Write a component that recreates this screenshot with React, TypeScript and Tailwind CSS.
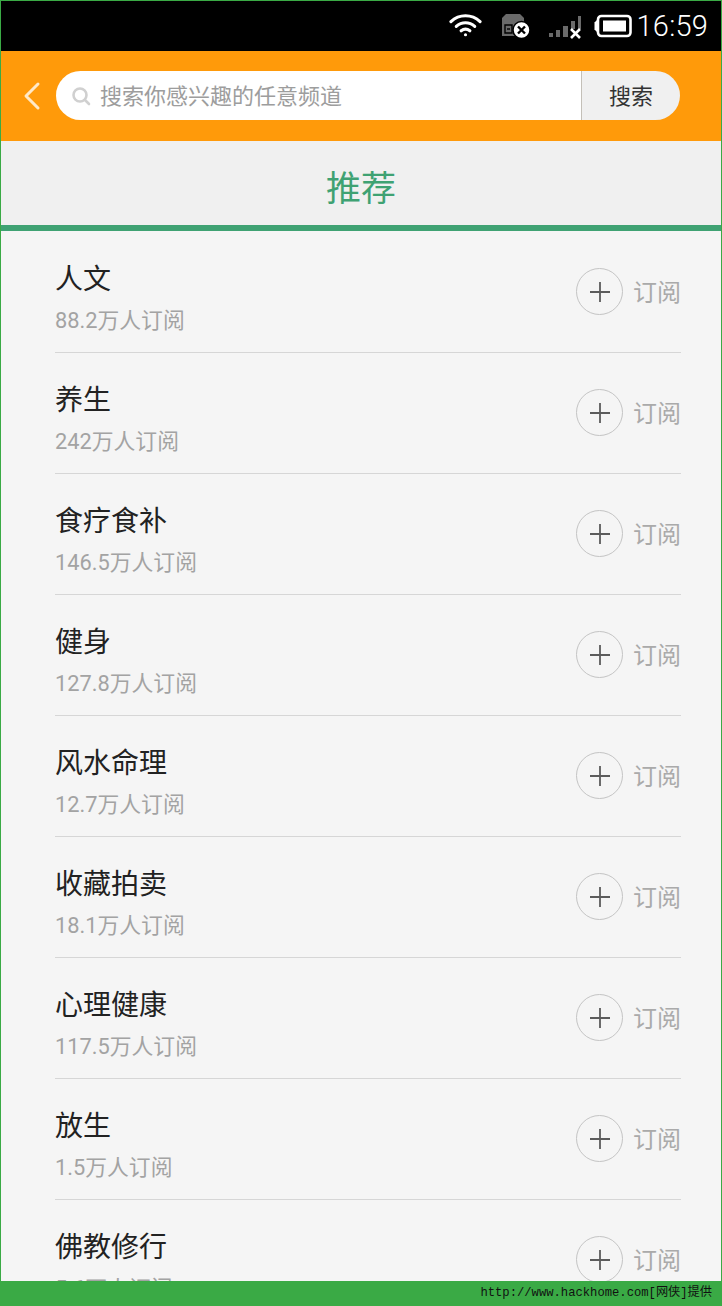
const font = { fontFamily: '"Roboto", "Noto Sans CJK SC", sans-serif' };

const channels = [
  { name: "人文", count: "88.2万人订阅" },
  { name: "养生", count: "242万人订阅" },
  { name: "食疗食补", count: "146.5万人订阅" },
  { name: "健身", count: "127.8万人订阅" },
  { name: "风水命理", count: "12.7万人订阅" },
  { name: "收藏拍卖", count: "18.1万人订阅" },
  { name: "心理健康", count: "117.5万人订阅" },
  { name: "放生", count: "1.5万人订阅" },
  { name: "佛教修行", count: "5.6万人订阅" },
];

function StatusBar() {
  return (
    <div className="h-[50px] shrink-0 bg-black flex items-center justify-end pr-[13px] text-white">
      {/* wifi */}
      <svg width="33" height="26" viewBox="0 0 34 26" className="mr-[19px] mb-[2px]" fill="none" stroke="#fff" strokeWidth="3.2" strokeLinecap="round">
        <path d="M2 9.5C10.5 1.5 23.5 1.5 32 9.5" />
        <path d="M7.5 14.5C13 9.5 21 9.5 26.5 14.5" />
        <path d="M12.5 19C15.2 16.8 18.8 16.8 21.5 19" />
        <circle cx="17" cy="23" r="1.6" fill="#fff" stroke="none" />
      </svg>
      {/* sim card missing */}
      <svg width="30" height="26" viewBox="0 0 30 26" className="mr-[17px] mb-[1px]">
        <path d="M5 1H19L23 5V23H1V5Z" fill="#6a6a6a" />
        <path d="M4 12H11V20H4Z" fill="none" stroke="#000" strokeWidth="1.4" />
        <path d="M6 16H9" stroke="#000" strokeWidth="1.4" />
        <circle cx="20.5" cy="17" r="8.5" fill="#fff" stroke="#000" strokeWidth="1.5" />
        <path d="M17 13.5L24 20.5M24 13.5L17 20.5" stroke="#000" strokeWidth="2.4" />
      </svg>
      {/* signal */}
      <svg width="34" height="26" viewBox="0 0 34 26" className="mr-[12px] mb-[1px]">
        <rect x="1" y="20" width="4" height="4" fill="#6a6a6a" />
        <rect x="8" y="17" width="4" height="7" fill="#6a6a6a" />
        <rect x="15" y="13" width="5" height="11" fill="#6a6a6a" />
        <rect x="23" y="8" width="4" height="8" fill="#6a6a6a" />
        <rect x="30" y="3" width="3" height="13" fill="#6a6a6a" />
        <path d="M23 16L32 25M32 16L23 25" stroke="#fff" strokeWidth="2.6" />
      </svg>
      {/* battery */}
      <svg width="38" height="24" viewBox="0 0 38 24" className="mr-[5px] mb-[1px]">
        <path d="M0.5 8.5L3 6V18L0.5 15.5Z" fill="#fff" />
        <rect x="4" y="2" width="32.5" height="20" rx="3.5" fill="none" stroke="#fff" strokeWidth="2.6" />
        <rect x="9" y="6.5" width="23" height="11" fill="#fff" />
      </svg>
      <span className="text-[29px] leading-none font-light tracking-[0.2px]" style={font}>16:59</span>
    </div>
  );
}

function SearchBar() {
  return (
    <div className="h-[90px] shrink-0 bg-[#ff9a0a] flex items-center pl-[21px] pr-[41px] pb-[1px]">
      <svg width="20" height="30" viewBox="0 0 20 30" className="mr-[14px] shrink-0" fill="none" stroke="#ffe9c8" strokeWidth="3" strokeLinecap="round" strokeLinejoin="round">
        <path d="M16 3L4 15L16 27" />
      </svg>
      <div className="flex-1 h-[49px] flex rounded-full overflow-hidden">
        <div className="flex-1 bg-white flex items-center pl-[15px]">
          <svg width="20" height="20" viewBox="0 0 20 20" className="mr-[9px]" fill="none" stroke="#d0d0d0" strokeWidth="2.6" strokeLinecap="round">
            <circle cx="9" cy="9" r="6.5" />
            <path d="M14 14L18 18" />
          </svg>
          <span className="text-[22px] leading-none mt-[3px] text-[#9d9d9d]" style={font}>搜索你感兴趣的任意频道</span>
        </div>
        <div className="w-[99px] bg-[#f0f0f0] border-l border-[#c4c0b8] flex items-center justify-center">
          <span className="text-[22px] leading-none mt-[3px] text-[#333333]" style={font}>搜索</span>
        </div>
      </div>
    </div>
  );
}

function ChannelRow({ name, count }: { name: string; count: string }) {
  return (
    <div className="h-[121px] shrink-0 border-b border-[#d6d6d6] flex items-center justify-between">
      <div className="flex flex-col pt-[11px]">
        <span className="text-[28px] leading-[38px] text-[#222222]" style={font}>{name}</span>
        <span className="text-[21.8px] leading-[26px] mt-[9px] text-[#a3a3a3]" style={font}>{count}</span>
      </div>
      <div className="flex items-center pt-[2px]">
        <div className="w-[47px] h-[47px] rounded-full border border-[#c4c4c4] flex items-center justify-center mr-[10px] mb-[3px]">
          <svg width="22" height="22" viewBox="0 0 22 22" stroke="#5c5c5c" strokeWidth="1.8">
            <path d="M11 1V21M1 11H21" />
          </svg>
        </div>
        <span className="text-[24px] leading-none text-[#aaaaaa]" style={font}>订阅</span>
      </div>
    </div>
  );
}

export default function App() {
  return (
    <div className="w-[722px] h-[1306px] flex flex-col overflow-hidden bg-[#f5f5f5] border-x border-t border-[#3aaa45]">
      <StatusBar />
      <SearchBar />
      <div className="h-[84px] shrink-0 bg-[#f0f0f0] flex items-center justify-center pt-[12px]">
        <span className="text-[35px] leading-none text-[#3fa273]" style={font}>推荐</span>
      </div>
      <div className="h-[6px] shrink-0 bg-[#3fa273]" />
      <div className="flex-1 min-h-0 overflow-hidden pl-[54px] pr-[40px] pt-[1px] flex flex-col">
        {channels.map((c) => (
          <ChannelRow key={c.name} name={c.name} count={c.count} />
        ))}
      </div>
      <div className="h-[25px] shrink-0 bg-[#3aaa45] -mx-[1px] flex items-center justify-end pr-[10px]">
        <span className="text-[12.2px] leading-none text-[#111111]" style={{ fontFamily: '"Liberation Mono", "Noto Sans CJK SC", monospace' }}>http://www.hackhome.com[网侠]提供</span>
      </div>
    </div>
  );
}
